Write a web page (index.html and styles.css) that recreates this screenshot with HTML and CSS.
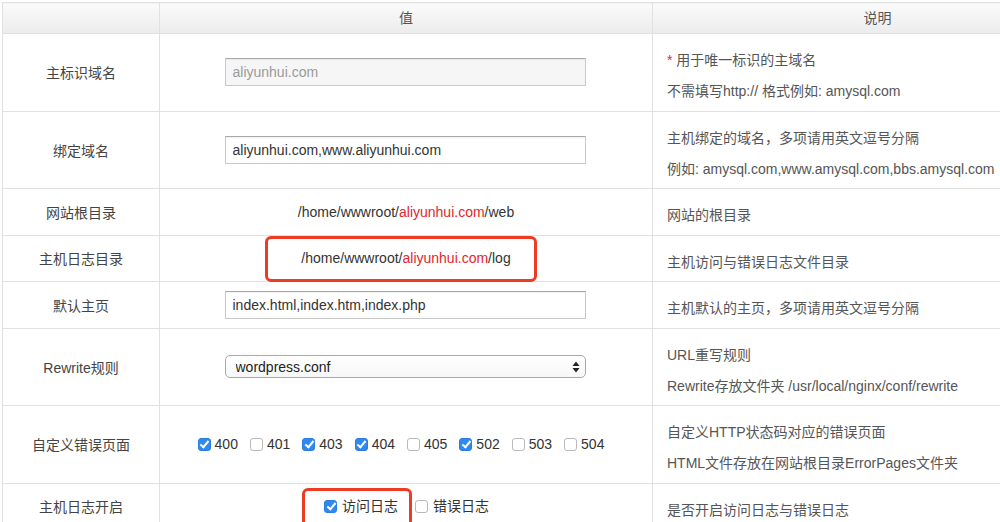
FILE: index.html
```html
<!DOCTYPE html>
<html lang="zh-CN">
<head>
  <meta charset="UTF-8" />
  <title>主机设置</title>
  <link rel="stylesheet" href="styles.css">
</head>
<body>
  <table class="host-table">
    <colgroup>
      <col class="col-name">
      <col class="col-value">
      <col class="col-desc">
    </colgroup>
    <thead>
      <tr>
        <th></th>
        <th>值</th>
        <th>说明</th>
      </tr>
    </thead>
    <tbody>
      <tr>
        <td class="name">主标识域名</td>
        <td class="value"><input class="text-input" type="text" value="aliyunhui.com" disabled></td>
        <td class="desc">
          <p><span class="req">*</span> 用于唯一标识的主域名</p>
          <p>不需填写http:// 格式例如: amysql.com</p>
        </td>
      </tr>
      <tr>
        <td class="name">绑定域名</td>
        <td class="value"><input class="text-input" type="text" value="aliyunhui.com,www.aliyunhui.com"></td>
        <td class="desc">
          <p>主机绑定的域名，多项请用英文逗号分隔</p>
          <p>例如: amysql.com,www.amysql.com,bbs.amysql.com</p>
        </td>
      </tr>
      <tr>
        <td class="name">网站根目录</td>
        <td class="value">/home/wwwroot/<span class="domain">aliyunhui.com</span>/web</td>
        <td class="desc"><p>网站的根目录</p></td>
      </tr>
      <tr>
        <td class="name">主机日志目录</td>
        <td class="value">
          <span class="mark mark-log"></span>
          /home/wwwroot/<span class="domain">aliyunhui.com</span>/log
        </td>
        <td class="desc"><p>主机访问与错误日志文件目录</p></td>
      </tr>
      <tr>
        <td class="name">默认主页</td>
        <td class="value"><input class="text-input" type="text" value="index.html,index.htm,index.php"></td>
        <td class="desc"><p>主机默认的主页，多项请用英文逗号分隔</p></td>
      </tr>
      <tr>
        <td class="name">Rewrite规则</td>
        <td class="value">
          <div class="select-wrap">
            <select class="select">
              <option>wordpress.conf</option>
            </select>
            <svg class="select-arrows" width="8" height="12" viewBox="0 0 8 12" aria-hidden="true">
              <path d="M4 0.5 L7.5 5 H0.5 Z" fill="#222"/>
              <path d="M4 11.5 L7.5 7 H0.5 Z" fill="#222"/>
            </svg>
          </div>
        </td>
        <td class="desc">
          <p>URL重写规则</p>
          <p>Rewrite存放文件夹 /usr/local/nginx/conf/rewrite</p>
        </td>
      </tr>
      <tr>
        <td class="name">自定义错误页面</td>
        <td class="value">
          <div class="checks">
            <label class="check"><input class="cb" type="checkbox" checked>400</label>
            <label class="check"><input class="cb" type="checkbox">401</label>
            <label class="check"><input class="cb" type="checkbox" checked>403</label>
            <label class="check"><input class="cb" type="checkbox" checked>404</label>
            <label class="check"><input class="cb" type="checkbox">405</label>
            <label class="check"><input class="cb" type="checkbox" checked>502</label>
            <label class="check"><input class="cb" type="checkbox">503</label>
            <label class="check"><input class="cb" type="checkbox">504</label>
          </div>
        </td>
        <td class="desc">
          <p>自定义HTTP状态码对应的错误页面</p>
          <p>HTML文件存放在网站根目录ErrorPages文件夹</p>
        </td>
      </tr>
      <tr>
        <td class="name">主机日志开启</td>
        <td class="value">
          <span class="mark mark-access"></span>
          <div class="checks logs">
            <label class="check"><input class="cb" type="checkbox" checked>访问日志</label>
            <label class="check"><input class="cb" type="checkbox">错误日志</label>
          </div>
        </td>
        <td class="desc"><p>是否开启访问日志与错误日志</p></td>
      </tr>
    </tbody>
  </table>
</body>
</html>
```

FILE: styles.css
```css
/* Reset */
* {
  margin: 0; padding: 0; box-sizing: border-box;
}
html, body {
  width: 100%; height: 100%;
  overflow: hidden;
  background: #fff;
  font-family: "Liberation Sans", "Noto Sans CJK SC", sans-serif;
  font-size: 14px;
  color: #444;
}

/* Table (wider than the window, cut off on the right like the original) */
.host-table {
  margin: 2px 0 0 2px;
  width: 1100px;
  border-collapse: collapse;
  table-layout: fixed;
  border: 1px solid #e1e1e1;
}
.col-name { width: 157px; }
.col-value { width: 493px; }
.col-desc { width: 450px; }

.host-table th,
.host-table td {
  border: 1px solid #e1e1e1;
}
.host-table th {
  height: 31px;
  line-height: 30px;
  font-weight: normal;
  color: #555;
  background: linear-gradient(#fbfbfb, #ececec);
}

/* Cells */
.name {
  text-align: center;
  vertical-align: middle;
  color: #444;
}
.value {
  position: relative;
  text-align: center;
  vertical-align: middle;
  color: #333;
}
.domain { color: #e3262b; }
.desc {
  padding: 11px 14px 3.5px;
  vertical-align: top;
  color: #555;
}
.desc p { line-height: 31px; }
.req { color: #e3262b; }

/* Inputs */
.text-input {
  display: block;
  margin: 0 auto;
  width: 361px;
  height: 28px;
  padding: 0 7px;
  border: 1px solid #c9c9c9;
  border-top-color: #a9a9a9;
  box-shadow: inset 0 1px 1px rgba(0, 0, 0, 0.06);
  font: inherit;
  color: #333;
  background: #fff;
  position: relative;
  left: -1px;
}
.text-input:disabled {
  background: #f6f6f6;
  color: #9a9a9a;
}

/* Select */
.select-wrap {
  position: relative;
  left: -1px;
  width: 361px;
  margin: 0 auto;
}
.select {
  display: block;
  width: 100%;
  height: 23px;
  padding: 0 24px 0 10px;
  appearance: none;
  -webkit-appearance: none;
  border: 1px solid #a8a8a8;
  border-radius: 5px;
  background: linear-gradient(#fff, #f7f7f7);
  font: inherit;
  color: #222;
  text-align: left;
}
.select-arrows {
  position: absolute;
  right: 6px;
  top: 6px;
  pointer-events: none;
}

/* Checkboxes */
.checks {
  display: flex;
  justify-content: center;
  align-items: center;
  gap: 12px;
  margin-left: -10px;
}
.checks.logs {
  gap: 17px;
  margin-left: 1px;
}
.check {
  display: flex;
  align-items: center;
  gap: 4px;
  line-height: 20px;
}
.logs .check { gap: 5px; }
.cb {
  appearance: none;
  -webkit-appearance: none;
  position: relative;
  width: 13px;
  height: 13px;
  border: 1px solid #b9b9b9;
  border-radius: 3px;
  background: #fff;
}
.cb:checked {
  background: #3189ee;
  border-color: #2a7de0;
}
.cb:checked::after {
  content: "";
  position: absolute;
  left: 3.5px;
  top: 0.5px;
  width: 3px;
  height: 7px;
  border: solid #fff;
  border-width: 0 2px 2px 0;
  transform: rotate(40deg);
}

/* Red annotation boxes */
.mark {
  position: absolute;
  border: 3px solid #ee3b24;
  border-radius: 6px;
  pointer-events: none;
}
.mark-log {
  left: 105px;
  top: 0;
  width: 272px;
  height: 46px;
}
.mark-access {
  left: 142px;
  top: 4px;
  width: 110px;
  height: 48px;
}
```
